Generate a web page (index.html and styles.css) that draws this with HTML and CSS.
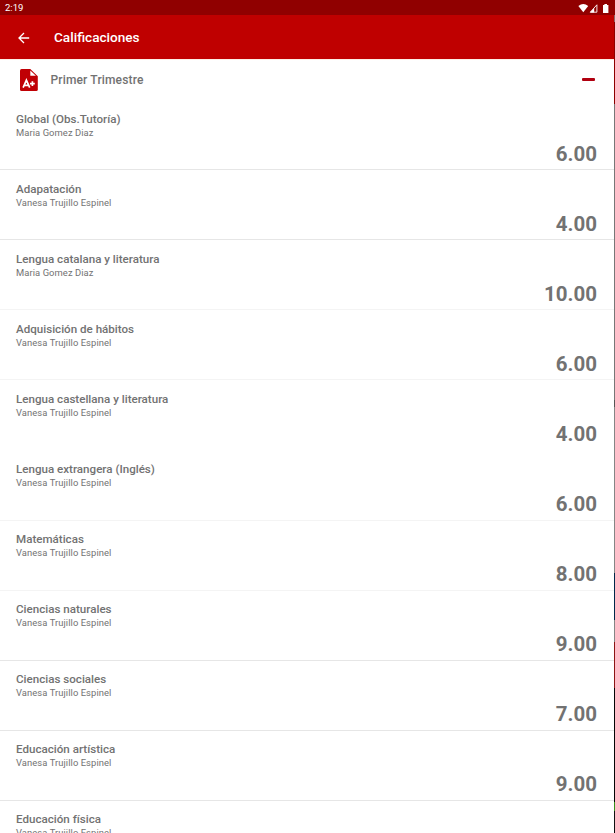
FILE: index.html
```html
<!DOCTYPE html>
<html lang="es">
<head>
    <meta charset="UTF-8">
    <meta name="viewport" content="width=device-width, initial-scale=1.0">
    <title>Calificaciones</title>
    <link rel="stylesheet" href="styles.css">
</head>
<body>
    <div class="screen">
        <div class="status-bar">
            <span>2:19</span>
            <svg class="status-icons" width="32" height="12" viewBox="0 0 32 12">
                <path d="M0.4 4 Q5.3 0 10.2 4 L5.3 10.2 Z" fill="#fff"/>
                <path d="M12.3 10.2 L18.9 2.8 V10.2 Z" fill="none" stroke="#fff" stroke-width="0.9"/>
                <path d="M12 10.6 L16.2 6 V10.6 Z" fill="#fff"/>
                <path d="M25 2.9 h1.4 v-1 h2.6 v1 h1.4 v8 h-5.4 Z" fill="#fff"/>
            </svg>
        </div>

        <header class="app-bar">
            <svg class="back" width="12" height="12" viewBox="0 0 12 12">
                <path d="M11.2 6 H1.2 M6 1 L1 6 L6 11" fill="none" stroke="#fff" stroke-width="1.3"/>
            </svg>
            <h1>Calificaciones</h1>
        </header>

        <div class="section">
            <svg class="file-icon" width="18" height="22" viewBox="0 0 18 22">
                <path d="M1.5 0 H10.3 L17.8 7.3 V20.5 Q17.8 22 16.3 22 H1.5 Q0 22 0 20.5 V1.5 Q0 0 1.5 0 Z" fill="#c00005"/>
                <path d="M10.3 1.4 V6.7 H15.9 Z" fill="#fff"/>
                <path d="M3.1 18.6 L6.4 11.2 L9.7 18.6 M4.4 16.4 H8.4 M10 14.7 H14.8 M12.4 12.3 V17.1" fill="none" stroke="#fff" stroke-width="1.7"/>
            </svg>
            <h2>Primer Trimestre</h2>
            <span class="minus"></span>
        </div>

        <ul class="grades">
            <li><h3>Global (Obs.Tutoría)</h3><p>Maria Gomez Diaz</p><b>6.00</b></li>
            <li><h3>Adapatación</h3><p>Vanesa Trujillo Espinel</p><b>4.00</b></li>
            <li class="light"><h3>Lengua catalana y literatura</h3><p>Maria Gomez Diaz</p><b>10.00</b></li>
            <li class="light"><h3>Adquisición de hábitos</h3><p>Vanesa Trujillo Espinel</p><b>6.00</b></li>
            <li class="no-line"><h3>Lengua castellana y literatura</h3><p>Vanesa Trujillo Espinel</p><b>4.00</b></li>
            <li class="light tall"><h3>Lengua extrangera (Inglés)</h3><p>Vanesa Trujillo Espinel</p><b>6.00</b></li>
            <li class="light"><h3>Matemáticas</h3><p>Vanesa Trujillo Espinel</p><b>8.00</b></li>
            <li><h3>Ciencias naturales</h3><p>Vanesa Trujillo Espinel</p><b>9.00</b></li>
            <li><h3>Ciencias sociales</h3><p>Vanesa Trujillo Espinel</p><b>7.00</b></li>
            <li><h3>Educación artística</h3><p>Vanesa Trujillo Espinel</p><b>9.00</b></li>
            <li><h3>Educación física</h3><p>Vanesa Trujillo Espinel</p></li>
        </ul>
    </div>
    <div class="edge"></div>
</body>
</html>
```
FILE: styles.css
```css
body {
    margin: 0;
    display: flex;
    height: 833px;
    overflow: hidden;
    background-color: #fff;
    font-family: Roboto, "Liberation Sans", sans-serif;
    color: #727272;
}

h1, h2, h3, p {
    margin: 0;
    font-weight: 500;
    white-space: nowrap;
}

.screen {
    flex: 1;
    min-width: 0;
}

.edge {
    width: 1px;
    background: linear-gradient(#900000 0 15px, #8d6868 15px 22px, #8c0000 22px 104px, #777 104px 400px, #555 400px 407px, #858585 407px 573px, #00284a 573px 620px, #858585 620px 642px, #8c1515 642px 688px, #050505 688px 802px, #36901b 802px 811px, #111 811px);
}

.status-bar {
    display: flex;
    justify-content: space-between;
    align-items: center;
    box-sizing: border-box;
    height: 15px;
    padding: 0 4px 0 5px;
    background-color: #900000;
    color: #fff;
    font-size: 9.5px;
}

.app-bar {
    display: flex;
    align-items: center;
    box-sizing: border-box;
    height: 44px;
    padding: 1px 18px 0;
    background-color: #bf0000;
    color: #fff;
}

.app-bar h1 {
    margin-left: 24px;
    padding-bottom: 1px;
    font-size: 13.6px;
}

.section {
    display: flex;
    align-items: center;
    box-sizing: border-box;
    height: 41px;
    padding: 0 19px 0 20px;
    border-top: 1px solid #fdeee6;
}

.section h2 {
    flex: 1;
    margin-left: 12.5px;
    font-size: 12px;
    letter-spacing: 0.15px;
}

.minus {
    width: 13px;
    height: 3px;
    margin-bottom: 2px;
    border-radius: 1px;
    background-color: #b00010;
}

.grades {
    margin: 0;
    padding: 0;
    list-style: none;
}

.grades li {
    display: flex;
    flex-direction: column;
    box-sizing: border-box;
    height: 70px;
    padding: 11px 17px 0 16px;
    border-bottom: 1px solid #e6e6e6;
}

.grades .light {
    border-color: #f4f4f4;
}

.grades .no-line {
    border-color: #fff;
}

.grades .tall {
    height: 71px;
}

/* rows below the tall one keep the same text rhythm */
.grades .tall ~ li {
    padding-top: 10px;
}

.grades h3 {
    font-size: 11.6px;
    line-height: 16px;
}

.grades p {
    font-size: 9.4px;
    font-weight: 400;
    line-height: 12px;
    letter-spacing: 0.08px;
}

.grades b {
    align-self: flex-end;
    margin-top: 3px;
    font-size: 20.5px;
    line-height: 24px;
}
```
